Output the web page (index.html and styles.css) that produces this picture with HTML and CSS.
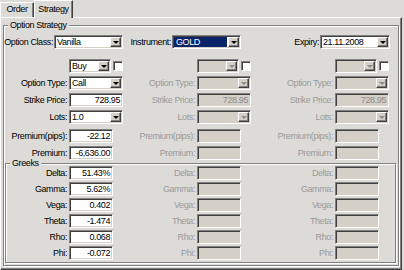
FILE: index.html
```html
<!DOCTYPE html>
<html lang="en">
<head>
    <meta charset="UTF-8">
    <title>Strategy</title>
    <link rel="stylesheet" href="styles.css">
</head>
<body>
<div class="tabs">
    <div class="tab tab-order">Order</div>
    <div class="tab tab-strategy active">Strategy</div>
</div>
<div class="page">
    <div class="group strategy">
        <div class="legend">Option Strategy</div>
        <div class="head-row">
            <span class="lbl lbl-class">Option Class:</span>
            <div class="field combo w-class"><span class="val">Vanilla</span><span class="btn"></span></div>
            <span class="lbl lbl-inst">Instrument:</span>
            <div class="field combo w-inst"><span class="val sel">GOLD</span><span class="btn"></span></div>
            <span class="lbl lbl-exp">Expiry:</span>
            <div class="field combo w-exp"><span class="val">21.11.2008</span><span class="btn"></span></div>
        </div>

        <div class="legs">
            <div class="leg col1">
                <div class="rows">
                    <span class="lbl"></span>
                    <div class="buy"><div class="field combo w-buy"><span class="val">Buy</span><span class="btn"></span></div><span class="check"></span></div>
                    <span class="lbl">Option Type:</span>
                    <div class="field combo"><span class="val">Call</span><span class="btn"></span></div>
                    <span class="lbl">Strike Price:</span>
                    <div class="field num">728.95</div>
                    <span class="lbl">Lots:</span>
                    <div class="field combo"><span class="val">1.0</span><span class="btn"></span></div>
                </div>
                <div class="rows premium">
                    <span class="lbl">Premium(pips):</span>
                    <div class="field num short">-22.12</div>
                    <span class="lbl">Premium:</span>
                    <div class="field num short">-6,636.00</div>
                </div>
            </div>

            <div class="leg col2 off">
                <div class="rows">
                    <span class="lbl"></span>
                    <div class="buy"><div class="field combo w-buy"><span class="val"></span><span class="btn"></span></div><span class="check"></span></div>
                    <span class="lbl">Option Type:</span>
                    <div class="field combo"><span class="val"></span><span class="btn"></span></div>
                    <span class="lbl">Strike Price:</span>
                    <div class="field num">728.95</div>
                    <span class="lbl">Lots:</span>
                    <div class="field combo"><span class="val"></span><span class="btn"></span></div>
                </div>
                <div class="rows premium">
                    <span class="lbl">Premium(pips):</span>
                    <div class="field num short"></div>
                    <span class="lbl">Premium:</span>
                    <div class="field num short"></div>
                </div>
            </div>

            <div class="leg col3 off">
                <div class="rows">
                    <span class="lbl"></span>
                    <div class="buy"><div class="field combo w-buy"><span class="val"></span><span class="btn"></span></div><span class="check"></span></div>
                    <span class="lbl">Option Type:</span>
                    <div class="field combo"><span class="val"></span><span class="btn"></span></div>
                    <span class="lbl">Strike Price:</span>
                    <div class="field num">728.95</div>
                    <span class="lbl">Lots:</span>
                    <div class="field combo"><span class="val"></span><span class="btn"></span></div>
                </div>
                <div class="rows premium">
                    <span class="lbl">Premium(pips):</span>
                    <div class="field num short"></div>
                    <span class="lbl">Premium:</span>
                    <div class="field num short"></div>
                </div>
            </div>
        </div>

        <div class="group greeks">
            <div class="legend">Greeks</div>
            <div class="legs">
                <div class="leg gcol1">
                    <div class="rows tight">
                        <span class="lbl">Delta:</span><div class="field num short">51.43%</div>
                        <span class="lbl">Gamma:</span><div class="field num short">5.62%</div>
                        <span class="lbl">Vega:</span><div class="field num short">0.402</div>
                        <span class="lbl">Theta:</span><div class="field num short">-1.474</div>
                        <span class="lbl">Rho:</span><div class="field num short">0.068</div>
                        <span class="lbl">Phi:</span><div class="field num short">-0.072</div>
                    </div>
                </div>
                <div class="leg col2 off">
                    <div class="rows tight">
                        <span class="lbl">Delta:</span><div class="field num short"></div>
                        <span class="lbl">Gamma:</span><div class="field num short"></div>
                        <span class="lbl">Vega:</span><div class="field num short"></div>
                        <span class="lbl">Theta:</span><div class="field num short"></div>
                        <span class="lbl">Rho:</span><div class="field num short"></div>
                        <span class="lbl">Phi:</span><div class="field num short"></div>
                    </div>
                </div>
                <div class="leg col3 off">
                    <div class="rows tight">
                        <span class="lbl">Delta:</span><div class="field num short"></div>
                        <span class="lbl">Gamma:</span><div class="field num short"></div>
                        <span class="lbl">Vega:</span><div class="field num short"></div>
                        <span class="lbl">Theta:</span><div class="field num short"></div>
                        <span class="lbl">Rho:</span><div class="field num short"></div>
                        <span class="lbl">Phi:</span><div class="field num short"></div>
                    </div>
                </div>
            </div>
        </div>
    </div>
</div>
</body>
</html>
```

FILE: styles.css
```css
*{
    margin: 0;
    padding: 0;
    box-sizing: border-box;
}
body{
    width: 404px;
    height: 270px;
    overflow: hidden;
    background: #dcdbd8;
    color: #000;
    font: 9px/12px "Liberation Sans", Arial, sans-serif;
    letter-spacing: -0.4px;
}

/* tabs */
.tabs{
    display: flex;
    align-items: flex-end;
    height: 17px;
}
.tab{
    height: 15px;
    line-height: 13px;
    text-align: center;
    border-top: 1px solid #fff;
    border-left: 1px solid #fff;
    border-right: 1px solid #404040;
    box-shadow: inset -1px 0 #808080;
}
.tab-order{
    width: 34px;
}
.tab-strategy{
    width: 39px;
}
.tab.active{
    height: 18px;
    line-height: 16px;
    margin-bottom: -1px;
    position: relative;
    z-index: 1;
    background: #dcdbd8;
}

/* page */
.page{
    width: 402px;
    height: 253px;
    border-top: 1px solid #fff;
    border-left: 1px solid #fff;
    border-right: 1px solid #404040;
    border-bottom: 1px solid #404040;
    box-shadow: inset -1px -1px #808080;
    padding: 0 2px 2px 1px;
}

/* group boxes */
.group{
    border: 1px solid #808080;
    box-shadow: inset 1px 1px #fff, 1px 1px #fff;
}
.legend{
    width: fit-content;
    line-height: 10px;
    margin: -6px 0 0 4px;
    padding: 0 2px;
    background: #dcdbd8;
}
.strategy{
    margin: 7px 0 0 1px;
    padding-bottom: 2px;
}
.greeks{
    margin: 3px 2px 0 1px;
    padding-bottom: 2px;
}
.greeks .legend{
    margin-bottom: -2px;
}

/* head row */
.head-row{
    display: flex;
    margin-top: 5px;
}
.lbl{
    text-align: right;
    white-space: nowrap;
    line-height: 14px;
}
.head-row .lbl{
    margin-right: 1px;
}
.lbl-class{ width: 49px; }
.lbl-inst{ width: 48px; }
.lbl-exp{ width: 78px; }
.w-class, .w-inst{ width: 69px; }
.w-exp{ width: 70px; }

/* legs */
.legs{
    display: flex;
    margin-top: 10px;
}
.greeks .legs{
    margin-top: 0;
}
.rows{
    display: grid;
    grid-template-columns: var(--lw) 54px;
    column-gap: 2px;
    row-gap: 3px;
    align-items: center;
}
.rows.premium{
    margin-top: 5px;
}
.rows.tight{
    row-gap: 2px;
}
.col1{ --lw: 63px; }
.gcol1{ --lw: 61px; }
.col2{ --lw: 72px; }
.col3{ --lw: 82px; }

/* fields */
.field{
    height: 14px;
    background: #fff;
    border-top: 1px solid #808080;
    border-left: 1px solid #808080;
    border-right: 1px solid #fff;
    border-bottom: 1px solid #fff;
    box-shadow: inset 1px 1px #404040, inset -1px -1px #d4d0c8;
    line-height: 12px;
    padding: 0 2px;
    overflow: hidden;
    white-space: nowrap;
}
.num{
    text-align: right;
}
.short{
    width: 44px;
}
.combo{
    display: flex;
    padding: 0;
}
.combo .val{
    flex: 1;
    padding-left: 2px;
}
.combo .val.sel{
    margin: 1px 0 1px 1px;
    line-height: 10px;
    background: #0a246a;
    color: #fff;
}
.btn{
    width: 11px;
    height: 10px;
    margin: 1px;
    background: #d4d0c8;
    border-top: 1px solid #fff;
    border-left: 1px solid #fff;
    border-right: 1px solid #404040;
    border-bottom: 1px solid #404040;
    box-shadow: inset -1px -1px #808080;
    display: flex;
    align-items: center;
    justify-content: center;
}
.btn::after{
    content: "";
    border-left: 3px solid transparent;
    border-right: 3px solid transparent;
    border-top: 3px solid #000;
}
.buy{
    display: flex;
    align-items: center;
}
.w-buy{
    width: 43px;
}
.check{
    width: 10px;
    height: 10px;
    margin-left: 2px;
    background: #fff;
    border-top: 1px solid #808080;
    border-left: 1px solid #808080;
    border-right: 1px solid #fff;
    border-bottom: 1px solid #fff;
    box-shadow: inset 1px 1px #404040;
}

/* disabled legs */
.off .lbl{
    color: #9a9a9a;
}
.off .field{
    background: #d4d0c8;
    color: #8c8c8c;
}
.off .btn::after{
    border-top-color: #8c8c8c;
}
```
